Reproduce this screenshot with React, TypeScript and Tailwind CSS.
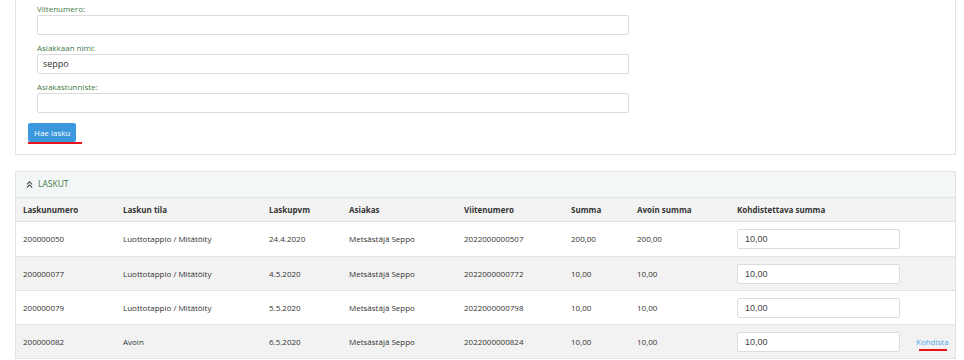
import React from 'react';
import { ChevronsUp } from 'lucide-react';

type Lasku = {
  numero: string;
  tila: string;
  pvm: string;
  asiakas: string;
  viite: string;
  summa: string;
  avoin: string;
  kohdistettava: string;
  kohdista?: boolean;
};

const laskut: Lasku[] = [
  { numero: '200000050', tila: 'Luottotappio / Mitätöity', pvm: '24.4.2020', asiakas: 'Metsästäjä Seppo', viite: '2022000000507', summa: '200,00', avoin: '200,00', kohdistettava: '10,00' },
  { numero: '200000077', tila: 'Luottotappio / Mitätöity', pvm: '4.5.2020', asiakas: 'Metsästäjä Seppo', viite: '2022000000772', summa: '10,00', avoin: '10,00', kohdistettava: '10,00' },
  { numero: '200000079', tila: 'Luottotappio / Mitätöity', pvm: '5.5.2020', asiakas: 'Metsästäjä Seppo', viite: '2022000000798', summa: '10,00', avoin: '10,00', kohdistettava: '10,00' },
  { numero: '200000082', tila: 'Avoin', pvm: '6.5.2020', asiakas: 'Metsästäjä Seppo', viite: '2022000000824', summa: '10,00', avoin: '10,00', kohdistettava: '10,00', kohdista: true },
];

const cols = 'grid grid-cols-[100px_146px_80px_115px_107px_66px_100px_179px_1fr] items-center';

const Field: React.FC<{ label: string; value?: string }> = ({ label, value }) => (
  <div className="flex flex-col">
    <label className="h-[12px] text-[8px] leading-[12px] text-[#3f7a46]">{label}</label>
    <div className="h-[20px] w-[592px] rounded-[2px] border border-[#dcdcdc] bg-white px-[5px] text-[9px] leading-[18px] text-[#333]">
      {value}
    </div>
  </div>
);

export default function App() {
  return (
    <div className="h-[360px] w-[964px] overflow-hidden bg-white font-['Open_Sans',sans-serif] text-[#333]">
      <div className="ml-[15px] w-[941px] border border-t-0 border-[#e3e3e3] pb-[12px] pl-[12px] pt-[3px]">
        <div className="flex flex-col gap-[7px] pl-[9px]">
          <Field label="Viitenumero:" />
          <Field label="Asiakkaan nimi:" value="seppo" />
          <Field label="Asiakastunniste:" />
        </div>
        <div className="relative mt-[10px] flex w-fit">
          <button className="h-[19px] rounded-[2px] bg-[#3b97de] px-[6px] text-[8px] leading-[19px] text-white">
            Hae lasku
          </button>
          <div className="absolute left-0 top-[19px] h-[2px] w-[54px] bg-[#e8141b]" />
        </div>
      </div>

      <div className="ml-[15px] mt-[16px] w-[941px] border border-[#e3e3e3]">
        <div className="flex h-[26px] items-center gap-[3px] border-b border-[#e3e3e3] bg-[#f4f7f7] pl-[8px] text-[8.5px] text-[#3f7a46]">
          <ChevronsUp size={11} strokeWidth={2.4} className="text-[#555]" />
          <span>LASKUT</span>
        </div>
        <div className={`${cols} h-[24px] border-b border-[#e0e0e0] bg-[#f3f3f3] text-[8px] font-bold`}>
          {['Laskunumero', 'Laskun tila', 'Laskupvm', 'Asiakas', 'Viitenumero', 'Summa', 'Avoin summa', 'Kohdistettava summa', ''].map((h, i) => (
            <div key={i} className="pl-[7px]">{h}</div>
          ))}
        </div>
        {laskut.map((l, i) => (
          <div
            key={l.numero}
            className={`${cols} h-[34px] text-[8px] ${i > 0 ? 'border-t border-[#e3e3e3]' : ''} ${i % 2 === 1 ? 'bg-[#f2f2f2]' : 'bg-white'}`}
          >
            <div className="pl-[7px]">{l.numero}</div>
            <div className="pl-[7px]">{l.tila}</div>
            <div className="pl-[7px]">{l.pvm}</div>
            <div className="pl-[7px]">{l.asiakas}</div>
            <div className="pl-[7px]">{l.viite}</div>
            <div className="pl-[7px]">{l.summa}</div>
            <div className="pl-[7px]">{l.avoin}</div>
            <div className="pl-[7px]">
              <div className="h-[20px] w-[163px] rounded-[2px] border border-[#dcdcdc] bg-white pl-[7px] font-['Liberation_Sans',sans-serif] text-[9px] leading-[18px] text-[#444]">
                {l.kohdistettava}
              </div>
            </div>
            <div className="pl-[7px]">
              {l.kohdista && (
                <div className="relative w-fit">
                  <span className="text-[8px] text-[#4ea5e6]">Kohdista</span>
                  <div className="absolute left-[3px] top-[13px] h-[2px] w-[28px] bg-[#e8141b]" />
                </div>
              )}
            </div>
          </div>
        ))}
      </div>
    </div>
  );
}
